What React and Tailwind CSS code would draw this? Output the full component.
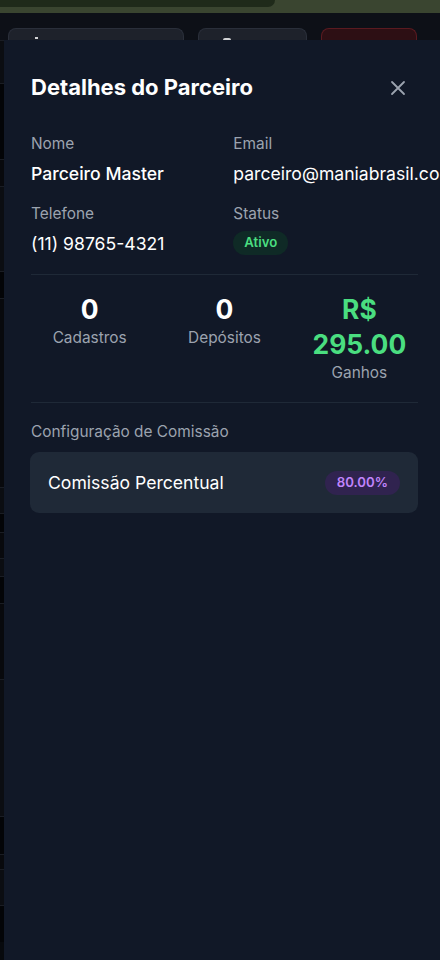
import React from "react";

function Field({ label, children }) {
  return (
    <div className="flex flex-col gap-[5.5px] min-w-0">
      <span className="text-[15.4px] leading-[22px] text-[#9ca3af]">{label}</span>
      {children}
    </div>
  );
}

function Stat({ value, label, green }) {
  return (
    <div className="flex flex-col items-center text-center">
      <span className={"text-[26.4px] leading-[35.2px] font-bold " + (green ? "text-[#4ade80]" : "text-white")}>{value}</span>
      <span className="text-[15.4px] leading-[22px] text-[#9ca3af] mt-[0.5px]">{label}</span>
    </div>
  );
}

export default function App() {
  const rows = [43, 76, 27, 85, 27, 189, 26, 19, 26, 18, 27, 76, 137, 38, 15, 36, 37];
  return (
    <div className="relative w-[440px] h-[960px] overflow-hidden bg-[#07090d]" style={{ fontFamily: "Inter, 'Noto Sans', sans-serif" }}>
      {/* background page */}
      <div className="flex flex-col">
        <div className="h-[13px] bg-[#3a4530]">
          <div className="h-[7px] w-[275px] bg-[#1f2a1a] rounded-br-[12px]" />
        </div>
        <div className="h-[27px] bg-[#0d1017] flex items-end gap-[14px] pl-[8px]">
          <div className="w-[176px] h-[12px] bg-[#1e222b] border border-b-0 border-[#2a2f3a] rounded-t-[8px] flex pl-[26px] pt-[8px]">
            <div className="w-[3px] h-[2px] bg-white/80" />
          </div>
          <div className="w-[109px] h-[12px] bg-[#1e222b] border border-b-0 border-[#2a2f3a] rounded-t-[8px] flex pl-[24px] pt-[9px]">
            <div className="w-[8px] h-[2px] bg-white/80 rounded-t" />
          </div>
          <div className="w-[96px] h-[12px] bg-[#2d0f14] border border-b-0 border-[#5a1a20] rounded-t-[8px]" />
        </div>
        <div className="flex flex-col w-[4px]">
          {rows.map((h, i) => (
            <div key={i} style={{ height: h }} className={"border-t border-[#1a1d24] " + (i % 3 === 0 ? "bg-[#0b0d12]" : i % 3 === 1 ? "bg-[#030407]" : "bg-[#08090d]")} />
          ))}
        </div>
      </div>

      {/* sheet */}
      <div className="absolute top-[40px] left-[4px] right-0 bottom-0 bg-[#111827] pl-[27px] pr-[22px] pt-[32px]">
        <div className="flex items-center justify-between h-[31px]">
          <h2 className="text-[22px] leading-[31px] font-bold text-white">Detalhes do Parceiro</h2>
          <svg width="24" height="24" viewBox="0 0 24 24" fill="none" stroke="#9ca3af" strokeWidth="1.8" strokeLinecap="round" className="mr-[8px]">
            <path d="M18 6 6 18M6 6l12 12" />
          </svg>
        </div>

        <div className="grid grid-cols-2 gap-x-[17.6px] gap-y-[16.5px] mt-[30px]">
          <Field label="Nome">
            <span className="text-[17.6px] leading-[26px] font-medium text-white">Parceiro Master</span>
          </Field>
          <Field label="Email">
            <span className="text-[17.6px] leading-[26px] text-white whitespace-nowrap">parceiro@maniabrasil.com</span>
          </Field>
          <Field label="Telefone">
            <span className="text-[17.6px] leading-[26px] text-white">(11) 98765-4321</span>
          </Field>
          <Field label="Status">
            <span className="self-start h-[24px] px-[11px] rounded-full bg-[#0f2a26] text-[#4ade80] text-[13.2px] font-semibold flex items-center">Ativo</span>
          </Field>
        </div>

        <div className="h-px bg-[#1f2937] mt-[17px] mb-[17px]" />

        <div className="grid grid-cols-3 gap-[17.6px]">
          <Stat value="0" label="Cadastros" />
          <Stat value="0" label="Depósitos" />
          <Stat value="R$ 295.00" label="Ganhos" green />
        </div>

        <div className="h-px bg-[#1f2937] mt-[18px] mb-[18px]" />

        <div className="text-[15.4px] leading-[22px] text-[#9ca3af]">Configuração de Comissão</div>

        <div className="mt-[9px] -ml-[1px] h-[61px] rounded-[9px] bg-[#1f2937] flex items-center justify-between pl-[18px] pr-[18px]">
          <span className="text-[17.6px] text-white">Comissão Percentual</span>
          <span className="h-[24px] px-[12px] rounded-full bg-[#30234f] text-[#c084fc] text-[13.2px] font-semibold flex items-center">80.00%</span>
        </div>
      </div>
    </div>
  );
}
